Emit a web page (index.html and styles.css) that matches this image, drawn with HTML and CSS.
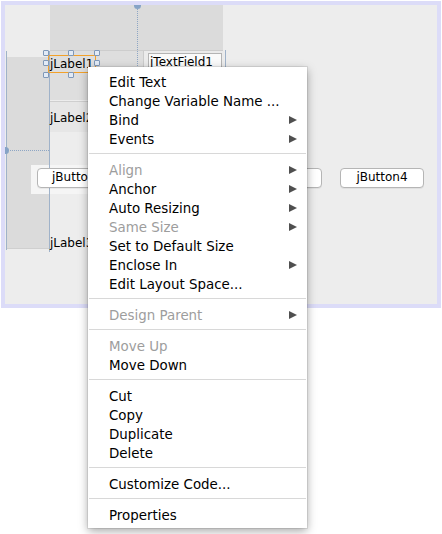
FILE: index.html
```html
<!DOCTYPE html>
<html>
<head>
<meta charset="utf-8">
<link rel="stylesheet" href="styles.css">
</head>
<body>
<div class="stage">
  <div class="frame"></div>
  <div class="top-panel"></div>
  <div class="left-panel"></div>
  <div class="cell cell-a"></div>
  <div class="cell cell-b"></div>
  <div class="cell cell-tf"></div>
  <div class="btn-cell"></div>
  <div class="vline vl-left"></div>
  <div class="vline vl-mid"></div>
  <div class="vline vl-right"></div>
  <div class="dotv"></div>
  <div class="doth"></div>
  <div class="pin pin-top"></div>
  <div class="pin pin-left"></div>

  <div class="label l1">jLabel1</div>
  <div class="label l2">jLabel2</div>
  <div class="label l3">jLabel3</div>
  <div class="textfield">jTextField1</div>
  <div class="btn b1">jButton1</div>
  <div class="btn b3">jButton3</div>
  <div class="btn b4">jButton4</div>

  <div class="sel"></div>
  <div class="handle h1"></div>
  <div class="handle h2"></div>
  <div class="handle h3"></div>
  <div class="handle h4"></div>
  <div class="handle h5"></div>
  <div class="handle h6"></div>
  <div class="handle h7"></div>

  <div class="menu">
    <div class="item">Edit Text</div>
    <div class="item">Change Variable Name ...</div>
    <div class="item sub">Bind</div>
    <div class="item sub">Events</div>
    <div class="sep"></div>
    <div class="item sub off">Align</div>
    <div class="item sub">Anchor</div>
    <div class="item sub">Auto Resizing</div>
    <div class="item sub off">Same Size</div>
    <div class="item">Set to Default Size</div>
    <div class="item sub">Enclose In</div>
    <div class="item">Edit Layout Space...</div>
    <div class="sep"></div>
    <div class="item sub off">Design Parent</div>
    <div class="sep"></div>
    <div class="item off">Move Up</div>
    <div class="item">Move Down</div>
    <div class="sep"></div>
    <div class="item">Cut</div>
    <div class="item">Copy</div>
    <div class="item">Duplicate</div>
    <div class="item">Delete</div>
    <div class="sep"></div>
    <div class="item">Customize Code...</div>
    <div class="sep"></div>
    <div class="item">Properties</div>
  </div>
</div>
</body>
</html>
```
FILE: styles.css
```css
html, body {
  margin: 0;
  padding: 0;
  background: #ffffff;
}
body {
  font-family: "DejaVu Sans", "Liberation Sans", sans-serif;
}
.stage {
  position: relative;
  width: 442px;
  height: 534px;
  overflow: hidden;
}
.frame {
  position: absolute;
  left: 1px;
  top: 1px;
  width: 440px;
  height: 307px;
  box-sizing: border-box;
  border: 4px solid #dcdcf8;
  background: #ededed;
}
.top-panel {
  position: absolute;
  left: 50px;
  top: 5px;
  width: 173px;
  height: 45px;
  background: #dbdbdb;
  border-bottom: 1px solid #cdcdcd;
}
.left-panel {
  position: absolute;
  left: 6px;
  top: 57px;
  width: 43px;
  height: 191px;
  background: #dbdbdb;
  border-bottom: 1px solid #cfcfcf;
}
.cell {
  position: absolute;
}
.cell-a {
  left: 50px;
  top: 51px;
  width: 93px;
  height: 49px;
  background: #dedede;
  border-right: 1px solid #cbcbcb;
}
.cell-b {
  left: 50px;
  top: 101px;
  width: 94px;
  height: 30px;
  background: #e6e6e6;
  border-top: 1px solid #cfcfcf;
}
.cell-tf {
  left: 144px;
  top: 51px;
  width: 80px;
  height: 30px;
  background: #ebebeb;
}
.btn-cell {
  position: absolute;
  left: 31px;
  top: 165px;
  width: 80px;
  height: 29px;
  background: #f5f5f5;
}
.vline {
  position: absolute;
  width: 1px;
  background: #9fb2c9;
}
.vl-left { left: 6px; top: 51px; height: 199px; }
.vl-mid { left: 49px; top: 51px; height: 201px; }
.vl-right { left: 225px; top: 50px; height: 30px; }
.dotv {
  position: absolute;
  left: 137px;
  top: 6px;
  width: 0;
  height: 70px;
  border-left: 1px dotted #8ea6c4;
}
.doth {
  position: absolute;
  left: 7px;
  top: 150px;
  width: 42px;
  height: 0;
  border-top: 1px dotted #8ea6c4;
}
.pin {
  position: absolute;
  background: #86a3c6;
}
.pin-top {
  left: 134px;
  top: 5px;
  width: 7px;
  height: 4px;
  border-radius: 0 0 4px 4px;
}
.pin-left {
  left: 5px;
  top: 147px;
  width: 4px;
  height: 7px;
  border-radius: 0 4px 4px 0;
}
.label {
  position: absolute;
  font-size: 12px;
  line-height: 14px;
  color: #000;
  white-space: nowrap;
}
.l1 { left: 50px; top: 57px; }
.l2 { left: 50px; top: 111px; }
.l3 { left: 50px; top: 236px; }
.textfield {
  position: absolute;
  left: 148px;
  top: 53px;
  width: 74px;
  height: 20px;
  box-sizing: border-box;
  border: 1px solid #b4b4b4;
  background: #fafafa;
  font-size: 12px;
  line-height: 17px;
  padding-left: 1px;
  color: #000;
  white-space: nowrap;
  overflow: hidden;
}
.btn {
  position: absolute;
  height: 20px;
  box-sizing: border-box;
  border: 1px solid #b5b5b5;
  border-radius: 4px;
  background: #ffffff;
  font-size: 12px;
  line-height: 17px;
  color: #000;
  text-align: center;
  white-space: nowrap;
  box-shadow: 0 1px 0 rgba(0,0,0,0.05);
}
.b1 { left: 37px; top: 168px; width: 84px; text-align: left; padding-left: 14px; }
.b3 { left: 238px; top: 168px; width: 84px; }
.b4 { left: 340px; top: 168px; width: 84px; }
.sel {
  position: absolute;
  left: 48px;
  top: 55px;
  width: 48px;
  height: 18px;
  box-sizing: border-box;
  border: 1px solid #f2a12a;
}
.handle {
  position: absolute;
  width: 6px;
  height: 6px;
  box-sizing: border-box;
  border: 1px solid #7f98b8;
  background: #e3ebf6;
  border-radius: 1px;
}
.h1 { left: 43px; top: 50px; }
.h2 { left: 68px; top: 50px; }
.h3 { left: 94px; top: 50px; }
.h4 { left: 43px; top: 60px; }
.h5 { left: 94px; top: 60px; }
.h6 { left: 43px; top: 72px; }
.h7 { left: 68px; top: 72px; }
.menu {
  position: absolute;
  left: 88px;
  top: 67px;
  width: 219px;
  height: 461px;
  box-sizing: border-box;
  padding: 5px 0 4px;
  background: #ffffff;
  box-shadow: 0 0 0 1px rgba(0,0,0,0.08), 0 3px 9px rgba(0,0,0,0.35);
  display: flex;
  flex-direction: column;
  font-size: 13.4px;
}
.item {
  height: 19px;
  box-sizing: border-box;
  padding: 2px 10px 0 21px;
  display: flex;
  align-items: center;
  justify-content: space-between;
  color: #000;
  white-space: nowrap;
  flex: none;
}
.item.off {
  color: #9d9d9d;
}
.item.sub::after {
  content: "";
  width: 0;
  height: 0;
  margin-top: -1px;
  border-left: 8px solid #4f4f4f;
  border-top: 4.5px solid transparent;
  border-bottom: 4.5px solid transparent;
}
.sep {
  height: 1px;
  background: #d8d8d8;
  margin: 5px 1px 6px;
  flex: none;
}
```
